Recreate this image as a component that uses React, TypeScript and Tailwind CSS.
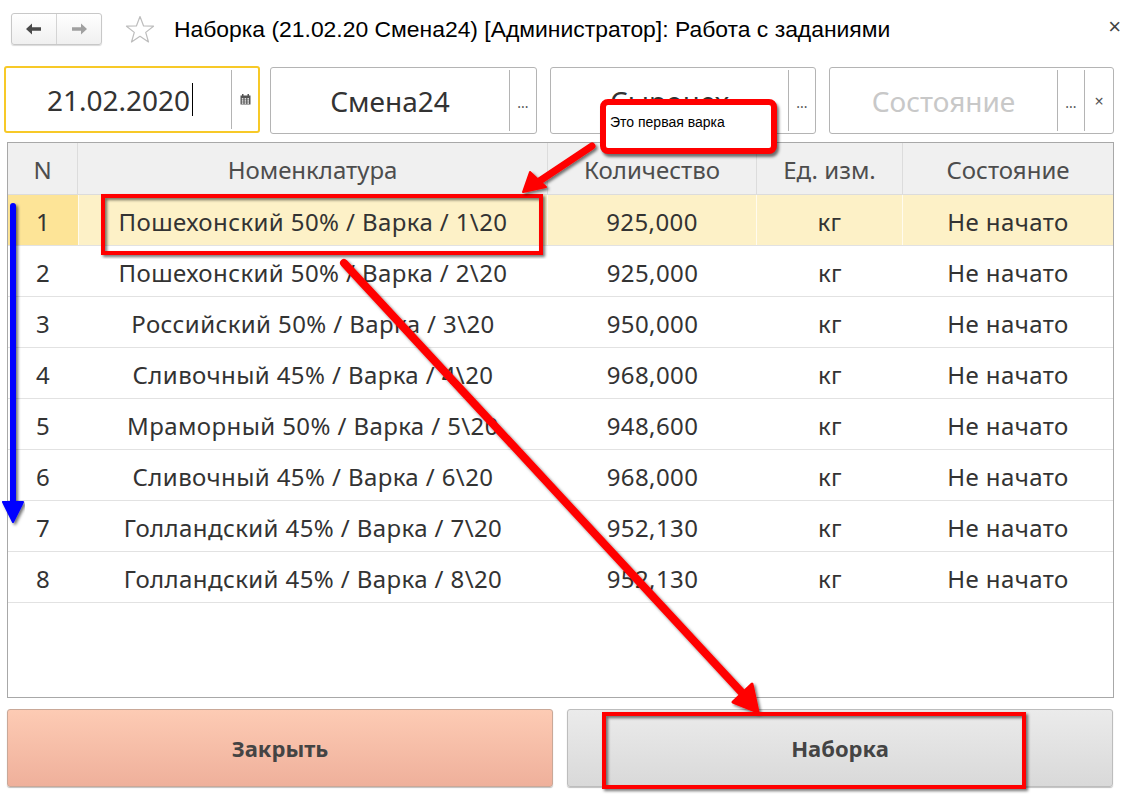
import React from "react";

const rows = [
  ["1", "Пошехонский 50% / Варка / 1\\20", "925,000"],
  ["2", "Пошехонский 50% / Варка / 2\\20", "925,000"],
  ["3", "Российский 50% / Варка / 3\\20", "950,000"],
  ["4", "Сливочный 45% / Варка / 4\\20", "968,000"],
  ["5", "Мраморный 50% / Варка / 5\\20", "948,600"],
  ["6", "Сливочный 45% / Варка / 6\\20", "968,000"],
  ["7", "Голландский 45% / Варка / 7\\20", "952,130"],
  ["8", "Голландский 45% / Варка / 8\\20", "952,130"],
];

const font = { fontFamily: '"Noto Sans", "Open Sans", sans-serif' };

function Field({
  text,
  w,
  placeholder,
  active,
  icon,
  clear,
}: {
  text: string;
  w: string;
  placeholder?: boolean;
  active?: boolean;
  icon: "cal" | "dots";
  clear?: boolean;
}) {
  return (
    <div
      className={`${w} h-[67px] flex rounded-[3px] bg-white ${
        active ? "border-2 border-[#f7c928]" : "border border-[#b4b4b4]"
      }`}
    >
      <div
        className={`flex-1 flex items-center justify-center text-[28px] ${
          placeholder ? "text-[#c8c8c8]" : "text-[#333]"
        }`}
      >
        <span className="relative">
          {text}
          {active && <span className="absolute right-[-3px] top-[4px] w-[1.5px] h-[33px] bg-black" />}
        </span>
      </div>
      <div className="w-px my-[2px] bg-[#b4b4b4]" />
      <div className="w-[26px] flex items-center justify-center text-[#555] text-[14px]">
        {icon === "cal" ? (
          <svg width="11" height="11" viewBox="0 0 11 11">
            <rect x="0.5" y="1.5" width="10" height="9" fill="#555" />
            <rect x="2" y="0" width="1.5" height="2.5" fill="#555" />
            <rect x="7.5" y="0" width="1.5" height="2.5" fill="#555" />
            {[0, 1, 2].map((r) =>
              [0, 1, 2].map((c) => (
                <rect key={`${r}${c}`} x={1.8 + c * 2.8} y={4.2 + r * 2.1} width="1.6" height="1.3" fill="#fff" />
              ))
            )}
          </svg>
        ) : (
          <span className="leading-none pt-[4px]">...</span>
        )}
      </div>
      {clear && (
        <>
          <div className="w-px my-[2px] bg-[#b4b4b4]" />
          <div className="w-[28px] flex items-center justify-center text-[#555] text-[16px]">×</div>
        </>
      )}
    </div>
  );
}

const cols = "grid grid-cols-[70px_470px_209px_146px_1fr]";

export default function App() {
  return (
    <div className="relative w-[1132px] h-[801px] bg-white overflow-hidden" style={font}>
      {/* Title bar */}
      <div className="h-[58px] flex items-center pl-[11px] pr-[10px]">
        <div className="flex h-[32px] w-[91px] rounded-[3px] border border-[#c8c8c8] bg-gradient-to-b from-white to-[#f0f0f0] shadow-[0_1px_1px_rgba(0,0,0,0.15)]">
          <div className="flex-1 flex items-center justify-center">
            <svg width="16" height="12" viewBox="0 0 16 12">
              <path d="M0 6 L6 0.5 L6 4.2 L15 4.2 L15 7.8 L6 7.8 L6 11.5 Z" fill="#4a4a4a" />
            </svg>
          </div>
          <div className="w-px bg-[#d4d4d4]" />
          <div className="flex-1 flex items-center justify-center">
            <svg width="16" height="12" viewBox="0 0 16 12">
              <path d="M16 6 L10 0.5 L10 4.2 L1 4.2 L1 7.8 L10 7.8 L10 11.5 Z" fill="#a0a0a0" />
            </svg>
          </div>
        </div>
        <svg className="ml-[23px]" width="30" height="29" viewBox="0 0 30 29">
          <path
            d="M15 1.5 L18.6 11 L28.5 11.2 L20.7 17.4 L23.5 27 L15 21.3 L6.5 27 L9.3 17.4 L1.5 11.2 L11.4 11 Z"
            fill="none"
            stroke="#bdbdbd"
            strokeWidth="1.2"
            strokeLinejoin="round"
          />
        </svg>
        <div
          className="ml-[19px] text-[22.9px] text-black"
          style={{ fontFamily: '"Liberation Sans", Arial, sans-serif' }}
        >
          Наборка (21.02.20 Смена24) [Администратор]: Работа с заданиями
        </div>
        <div className="ml-auto text-[22px] text-[#444] leading-none pr-[1px] pb-[4px]" style={{ fontFamily: '"Liberation Sans", sans-serif' }}>
          ×
        </div>
      </div>

      {/* Fields */}
      <div className="flex items-start pl-[4px] pt-[8px] h-[84px]">
        <Field text="21.02.2020" w="w-[256px]" active icon="cal" />
        <div className="ml-[10px] mt-[1px]">
          <Field text="Смена24" w="w-[267px]" icon="dots" />
        </div>
        <div className="ml-[13px] mt-[1px]">
          <Field text="Сыроцех" w="w-[266px]" icon="dots" />
        </div>
        <div className="ml-[13px] mt-[1px]">
          <Field text="Состояние" w="w-[285px]" placeholder icon="dots" clear />
        </div>
      </div>

      {/* Table */}
      <div className="ml-[7px] w-[1107px] h-[556px] border border-[#a8a8a8] bg-white">
        <div className={`${cols} h-[52px] bg-[#f0f0f0] border-b border-[#dcdcdc] text-[24px] text-[#4d4d4d]`}>
          {["N", "Номенклатура", "Количество", "Ед. изм.", "Состояние"].map((h, i) => (
            <div
              key={h}
              className={`flex items-center justify-center pt-[2px] ${i < 4 ? "border-r border-[#dcdcdc]" : ""}`}
            >
              {h}
            </div>
          ))}
        </div>
        {rows.map((r, idx) => {
          const sel = idx === 0;
          return (
            <div
              key={r[0]}
              className={`${cols} h-[51px] border-b border-[#e2e2e2] text-[24px] tracking-[0.4px] text-[#333] ${
                sel ? "bg-[#fdf1c7]" : ""
              }`}
            >
              <div className={`flex items-center pl-[28px] pt-[4px] ${sel ? "bg-[#fde497]" : ""}`}>{r[0]}</div>
              <div className={`flex items-center justify-center pt-[4px] ${sel ? "border-x border-white/70" : ""}`}>{r[1]}</div>
              <div className={`flex items-center justify-center pt-[4px] ${sel ? "border-r border-white/70" : ""}`}>{r[2]}</div>
              <div className={`flex items-center justify-center pt-[4px] ${sel ? "border-r border-white/70" : ""}`}>кг</div>
              <div className="flex items-center justify-center pt-[4px]">Не начато</div>
            </div>
          );
        })}
      </div>

      {/* Buttons */}
      <div className="flex gap-[14px] pl-[7px] pt-[11px]">
        <div className="w-[546px] h-[78px] rounded-[3px] border border-[#c9a898] bg-gradient-to-b from-[#fdcbb4] to-[#efb09b] shadow-[0_1px_1px_rgba(0,0,0,0.25)] flex items-center justify-center text-[22px] font-bold text-[#444]">
          Закрыть
        </div>
        <div className="w-[546px] h-[78px] rounded-[3px] border border-[#bdbdbd] bg-gradient-to-b from-[#ebebeb] to-[#d9d9d9] shadow-[0_1px_1px_rgba(0,0,0,0.25)] flex items-center justify-center text-[22px] font-bold text-[#444]">
          Наборка
        </div>
      </div>

      {/* Annotations overlay */}
      <svg className="absolute left-0 top-0 pointer-events-none" width="1132" height="801" viewBox="0 0 1132 801">
        <defs>
          <filter id="sh" x="-10%" y="-10%" width="120%" height="120%">
            <feDropShadow dx="2" dy="2" stdDeviation="1.5" floodColor="#000" floodOpacity="0.55" />
          </filter>
        </defs>
        {/* blue arrow */}
        <g filter="url(#sh)">
          <line x1="13" y1="206" x2="13" y2="505" stroke="#0000ff" strokeWidth="6" strokeLinecap="round" />
          <path d="M3 502 L23 502 L13 522 Z" fill="#0000ff" stroke="#0000ff" strokeWidth="2" strokeLinejoin="round" />
        </g>
        {/* red box row 1 */}
        <rect x="103" y="196" width="438" height="57" fill="none" stroke="#ff0000" strokeWidth="4" filter="url(#sh)" />
        {/* callout arrow */}
        <g filter="url(#sh)">
          <line x1="592" y1="146" x2="538" y2="182" stroke="#ff0000" strokeWidth="7" strokeLinecap="round" />
          <path d="M523 192 L530 172 L546 187 Z" fill="#ff0000" stroke="#ff0000" strokeWidth="2" strokeLinejoin="round" />
        </g>
        {/* big diagonal arrow */}
        <g filter="url(#sh)">
          <line x1="344" y1="263" x2="745" y2="696" stroke="#ff0000" strokeWidth="8" strokeLinecap="round" />
          <path d="M758 712 L733 702 L752 684 Z" fill="#ff0000" stroke="#ff0000" strokeWidth="3" strokeLinejoin="round" />
        </g>
        {/* red box Наборка */}
        <rect x="604" y="714" width="420" height="73" fill="none" stroke="#ff0000" strokeWidth="4" filter="url(#sh)" />
      </svg>

      {/* Callout */}
      <div
        className="absolute left-[600px] top-[99px] w-[177px] h-[55px] bg-white border-[6px] border-[#ff0000] rounded-[8px] shadow-[2px_3px_3px_rgba(0,0,0,0.55)] pl-[4px] pt-[7px] text-[14px] text-black"
        style={{ fontFamily: '"Liberation Sans", Arial, sans-serif' }}
      >
        Это первая варка
      </div>
    </div>
  );
}
